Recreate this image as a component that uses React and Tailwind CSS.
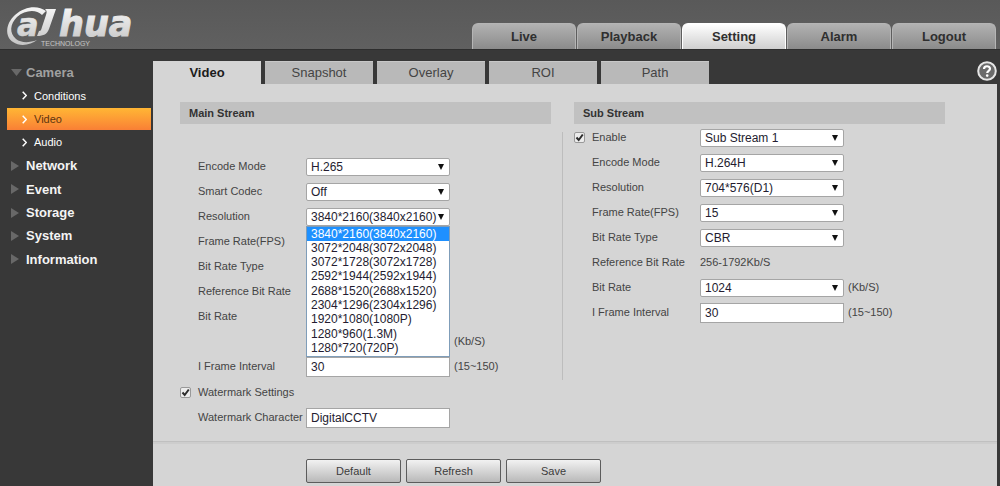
import React, { useState } from "react";

const mainTabs = ["Live", "Playback", "Setting", "Alarm", "Logout"];
const subTabs = ["Video", "Snapshot", "Overlay", "ROI", "Path"];

const menu = [
  { label: "Camera", open: true },
  { label: "Conditions", child: true },
  { label: "Video", child: true },
  { label: "Audio", child: true },
  { label: "Network" },
  { label: "Event" },
  { label: "Storage" },
  { label: "System" },
  { label: "Information" },
];

const resolutions = [
  "3840*2160(3840x2160)",
  "3072*2048(3072x2048)",
  "3072*1728(3072x1728)",
  "2592*1944(2592x1944)",
  "2688*1520(2688x1520)",
  "2304*1296(2304x1296)",
  "1920*1080(1080P)",
  "1280*960(1.3M)",
  "1280*720(720P)",
];

const Logo = () => (
  <svg width="136" height="48" viewBox="0 0 136 48" role="img" aria-label="alhua technology">
    <defs>
      <linearGradient id="silver" x1="0" y1="6" x2="0" y2="44" gradientUnits="userSpaceOnUse">
        <stop offset="0" stopColor="#f6f6f6" />
        <stop offset="1" stopColor="#c4c4c4" />
      </linearGradient>
    </defs>
    <g fill="url(#silver)">
      <path d="M46 10C38 4 25 5 15 14C5 23 5 36 13 41C20 46 31 44 37 39C29 42 21 42 16 38C9 32 10 23 17 16C25 9 36 8 42 14Z" />
      <path d="M45 8H56L49 28C47 33 44 35 37 35L39 30C41 30 41 29 42 26L46 14C47 11 47 10 45 8Z" />
      <g fontFamily="DejaVu Sans" fontWeight="bold" fontStyle="italic" stroke="url(#silver)">
        <text x="17" y="35" fontSize="32" strokeWidth="0.600">a</text>
        <text x="59" y="35" fontSize="35" strokeWidth="1">hua</text>
      </g>
      <text x="41" y="45" fontFamily="Liberation Sans" fontSize="7">TECHNOLOGY</text>
    </g>
  </svg>
);

const HelpIcon = () => (
  <svg width="20" height="20" viewBox="0 0 20 20" aria-hidden="true">
    <circle cx="10" cy="10" r="8.8" fill="#6b6b6b" stroke="#e6e6e6" strokeWidth="2" />
    <path d="M7 8C7 4.400 13 4.400 13 7.800C13 9.800 10.200 9.800 10.200 12" fill="none" stroke="#fff" strokeWidth="2.200" />
    <circle cx="10.200" cy="14.600" r="1.300" fill="#fff" />
  </svg>
);

const Row = ({ label, id, unit, children }) => (
  <div className="flex h-[25px] items-center">
    <label htmlFor={id} className="w-[108px] shrink-0 whitespace-nowrap">{label}</label>
    {children}
    {unit && <span className="ml-1">{unit}</span>}
  </div>
);

const Select = ({ id, options, onMouseDown }) => (
  <span className="relative block w-36 shrink-0">
    <select
      id={id}
      onMouseDown={onMouseDown}
      className="block h-[18px] w-full appearance-none rounded-xs border border-[#a5a5a5] bg-white pl-[4px] text-[12px] leading-4 text-[#241c30]"
    >
      {options.map((o) => (
        <option key={o}>{o}</option>
      ))}
    </select>
    <svg className="pointer-events-none absolute top-[6px] right-[6px]" width="6" height="6" viewBox="0 0 6 6">
      <path d="M0 0H6L3 6Z" fill="#111" />
    </svg>
  </span>
);

const TextBox = ({ id, value }) => (
  <input
    id={id}
    type="text"
    defaultValue={value}
    className="h-5 w-36 shrink-0 border border-[#a5a5a5] bg-white pl-[4px] text-[12px] leading-4 text-[#241c30]"
  />
);

const Check = ({ id }) => (
  <span className="relative mr-[7px] size-[11px] shrink-0">
    <input
      id={id}
      type="checkbox"
      defaultChecked
      className="peer block size-[11px] appearance-none rounded-xs border border-[#999] bg-[#ececec]"
    />
    <svg className="pointer-events-none absolute inset-0 hidden peer-checked:block" width="11" height="11" viewBox="0 0 11 11">
      <path d="M2.500 5.500L4.700 8L8.800 2.500" fill="none" stroke="#2c2c2c" strokeWidth="2" />
    </svg>
  </span>
);

const SectionTitle = ({ children }) => (
  <h2 className="flex h-[22px] items-center bg-[#c1c1c1] pl-[9px] text-[11px] font-bold text-[#333]">{children}</h2>
);

const Sidebar = () => (
  <nav className="w-[153px] shrink-0 pr-[2px] pl-[7px]">
    <ul className="grid h-[210px] auto-rows-fr">
      {menu.map((item) =>
        item.child ? (
          <li key={item.label} className="flex items-center">
            <a
              href="#"
              className={`flex h-[22px] w-full items-center pl-[15px] text-[11px] ${
                item.label === "Video" ? "bg-linear-to-b from-[#ffb634] to-[#f97f35] text-[#5d3510]" : "text-white"
              }`}
            >
              <svg className="mr-[7px]" width="5" height="9" viewBox="0 0 5 9">
                <path d="M0.700 0.700L4.300 4.500L0.700 8.300" fill="none" stroke="#fff" strokeWidth="1.500" />
              </svg>
              {item.label}
            </a>
          </li>
        ) : (
          <li key={item.label} className="flex items-center">
            <a href="#" className={`flex items-center pl-1 text-[13px] font-bold ${item.open ? "text-[#a0a0a0]" : "text-[#f4f4f4]"}`}>
              <svg className="mr-1" width="11" height="10" viewBox="0 0 11 10">
                <path d={item.open ? "M0 1H11L5.500 8Z" : "M0 0L8 5L0 10Z"} fill="#686868" />
              </svg>
              {item.label}
            </a>
          </li>
        )
      )}
    </ul>
  </nav>
);

const ResolutionSelect = () => {
  const [open, setOpen] = useState(true);

  return (
    <div className="relative">
      <Select
        id="main-resolution"
        options={resolutions}
        onMouseDown={(e) => {
          e.preventDefault();
          setOpen(!open);
        }}
      />
      {open && (
        <ul
          role="listbox"
          className="absolute top-[18px] left-0 z-10 grid h-[131px] w-36 auto-rows-fr border border-[#7f9db9] bg-white text-[12px] leading-[14px] text-[#241c30]"
        >
          {resolutions.map((r, i) => (
            <li
              key={r}
              role="option"
              aria-selected={i === 0}
              className={`pl-[4px] whitespace-nowrap ${i === 0 ? "bg-[#1e90ff] text-white" : ""}`}
            >
              {r}
            </li>
          ))}
        </ul>
      )}
    </div>
  );
};

const MainStream = () => (
  <section className="w-[371px] shrink-0">
    <SectionTitle>Main Stream</SectionTitle>
    <div className="mt-[30px] pl-[18px]">
      <Row label="Encode Mode" id="main-encode"><Select id="main-encode" options={["H.265"]} /></Row>
      <Row label="Smart Codec" id="main-codec"><Select id="main-codec" options={["Off"]} /></Row>
      <Row label="Resolution" id="main-resolution"><ResolutionSelect /></Row>
      <Row label="Frame Rate(FPS)" id="main-fps"><Select id="main-fps" options={["15"]} /></Row>
      <Row label="Bit Rate Type" id="main-type"><Select id="main-type" options={["CBR"]} /></Row>
      <Row label="Reference Bit Rate" />
      <Row label="Bit Rate" id="main-rate"><Select id="main-rate" options={["1024"]} /></Row>
      <Row unit="(Kb/S)"><span className="w-36" /></Row>
      <Row label="I Frame Interval" id="main-interval" unit="(15~150)"><TextBox id="main-interval" value="30" /></Row>
      <div className="-ml-[18px] flex h-[26px] items-center">
        <Check id="watermark" />
        <label htmlFor="watermark">Watermark Settings</label>
      </div>
      <Row label="Watermark Character" id="main-mark"><TextBox id="main-mark" value="DigitalCCTV" /></Row>
    </div>
  </section>
);

const SubStream = () => (
  <section className="w-[371px] shrink-0">
    <SectionTitle>Sub Stream</SectionTitle>
    <div className="mt-px pl-[18px]">
      <div className="-ml-[18px] flex h-[25px] items-center">
        <Check id="sub-enable" />
        <label htmlFor="sub-enable" className="w-[108px]">Enable</label>
        <Select id="sub-stream" options={["Sub Stream 1"]} />
      </div>
      <Row label="Encode Mode" id="sub-encode"><Select id="sub-encode" options={["H.264H"]} /></Row>
      <Row label="Resolution" id="sub-resolution"><Select id="sub-resolution" options={["704*576(D1)"]} /></Row>
      <Row label="Frame Rate(FPS)" id="sub-fps"><Select id="sub-fps" options={["15"]} /></Row>
      <Row label="Bit Rate Type" id="sub-type"><Select id="sub-type" options={["CBR"]} /></Row>
      <Row label="Reference Bit Rate"><span>256-1792Kb/S</span></Row>
      <Row label="Bit Rate" id="sub-rate" unit="(Kb/S)"><Select id="sub-rate" options={["1024"]} /></Row>
      <Row label="I Frame Interval" id="sub-interval" unit="(15~150)"><TextBox id="sub-interval" value="30" /></Row>
    </div>
  </section>
);

export default function App() {
  const [tab, setTab] = useState("Video");

  return (
    <div className="flex min-h-screen flex-col bg-[#383838] font-['Liberation_Sans',Arial,sans-serif]">
      <header className="flex h-[50px] items-end justify-between border-b border-[#2e2e2e] bg-linear-to-b from-[#595959] to-[#606060] pr-1">
        <Logo />
        <nav className="flex gap-px">
          {mainTabs.map((t) => (
            <button
              key={t}
              className={`h-[26px] w-[104px] rounded-t-md border border-b-0 text-[13px] font-bold text-[#2f2f2f] ${
                t === "Setting"
                  ? "border-white bg-linear-to-b from-white to-[#cfcfcf]"
                  : "border-[#b5b5b5] bg-linear-to-b from-[#b2b2b2] to-[#8b8b8b]"
              }`}
            >
              {t}
            </button>
          ))}
        </nav>
      </header>

      <div className="flex flex-1 pt-[11px]">
        <Sidebar />
        <div className="flex min-w-0 flex-1 flex-col">
          <div className="flex justify-between pr-[3px]">
            <div className="flex gap-1">
              {subTabs.map((t) => (
                <button
                  key={t}
                  onClick={() => setTab(t)}
                  className={`h-[23px] w-[108px] text-[13px] ${
                    t === tab ? "bg-[#d5d5d5] font-bold text-[#1c1c1c]" : "border-t border-[#c8c8c8] bg-[#b9b9b9] text-[#444]"
                  }`}
                >
                  {t}
                </button>
              ))}
            </div>
            <button aria-label="Help" className="h-5">
              <HelpIcon />
            </button>
          </div>

          <main className="mr-[3px] flex-1 bg-[#d5d5d5] text-[11px] text-[#444]">
            <div className="flex pt-[18px] pl-[27px]">
              <MainStream />
              <div className="mx-[11px] mt-[30px] mb-[50px] w-px bg-[#bdbdbd]" />
              <SubStream />
            </div>
            <div className="mt-[11px] h-[3px] border-t border-[#c0c0c0] bg-[#cdcdcd]" />
            <div className="mt-[15px] flex gap-[5px] pl-[153px]">
              {["Default", "Refresh", "Save"].map((b) => (
                <button
                  key={b}
                  className="h-6 w-[95px] rounded-xs border border-[#5c5c5c] bg-linear-to-b from-[#f2f2f2] to-[#b9b9b9] text-[11px] text-[#3c3c3c]"
                >
                  {b}
                </button>
              ))}
            </div>
          </main>
        </div>
      </div>
    </div>
  );
}
